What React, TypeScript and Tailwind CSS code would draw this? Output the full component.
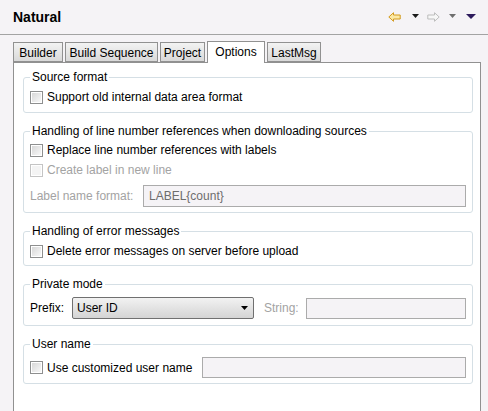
import React from 'react';

const font = { fontFamily: '"Liberation Sans", Arial, sans-serif' };

const Check: React.FC<{ disabled?: boolean }> = ({ disabled }) => (
  <span
    className={`inline-block w-[13px] h-[13px] shrink-0 border p-px ${
      disabled ? 'border-[#c4c4c4] bg-white' : 'border-[#8e8f8f] bg-white'
    }`}
  >
    <span
      className={`block w-full h-full ${
        disabled
          ? 'bg-[#f4f4f4]'
          : 'bg-gradient-to-br from-[#d8d8d8] to-[#f8f8f8]'
      }`}
    />
  </span>
);

const Group: React.FC<{ title: string; className?: string; children: React.ReactNode }> = ({
  title,
  className = '',
  children,
}) => (
  <fieldset
    className={`border border-[#d5dfe5] rounded-[3px] pl-[6px] pr-[6px] ${className}`}
  >
    <legend className="px-[2px] leading-[14px] text-black">{title}</legend>
    {children}
  </fieldset>
);

const Arrow: React.FC<{ dir: 'left' | 'right'; stroke: string; fill: string }> = ({
  dir,
  stroke,
  fill,
}) => (
  <svg width="13" height="10" viewBox="0 0 13 10" className={dir === 'right' ? '-scale-x-100' : ''}>
    <path
      d="M0.8 5 L5.5 0.7 V3 H12.2 V7 H5.5 V9.3 Z"
      fill={fill}
      stroke={stroke}
      strokeWidth="1"
      strokeLinejoin="miter"
    />
  </svg>
);

const Tri: React.FC<{ color: string; size?: number }> = ({ color, size = 7 }) => (
  <svg width={size} height={Math.ceil(size / 2) + 1} viewBox={`0 0 ${size} ${Math.ceil(size / 2) + 1}`}>
    <path d={`M0 0 H${size} L${size / 2} ${Math.ceil(size / 2)} Z`} fill={color} />
  </svg>
);

const tabs = [
  { label: 'Builder', w: 'w-[50px]' },
  { label: 'Build Sequence', w: 'w-[93px]' },
  { label: 'Project', w: 'w-[45px]' },
  { label: 'Options', w: 'w-[58px]', active: true },
  { label: 'LastMsg', w: 'w-[54px]' },
];

export default function App() {
  return (
    <div
      className="w-[488px] h-[411px] overflow-hidden bg-[#f5f3f6] text-[12px] text-black flex flex-col"
      style={font}
    >
      {/* header */}
      <div className="h-[35px] shrink-0 flex items-center justify-between pl-[13px] pr-[12px] border-b border-[#a3a3a3]">
        <span className="font-bold text-[14px] leading-none -mt-[1px]">Natural</span>
        <div className="flex items-center -mt-[1px]">
          <Arrow dir="left" stroke="#d39a1f" fill="#fbe9a6" />
          <span className="ml-[11px]"><Tri color="#1a1a1a" /></span>
          <span className="ml-[8px]"><Arrow dir="right" stroke="#bdbdbd" fill="#f7f7f7" /></span>
          <span className="ml-[9px]"><Tri color="#6e6e6e" /></span>
          <span className="ml-[10px]"><Tri color="#2c1a5c" size={10} /></span>
        </div>
      </div>

      {/* tabs */}
      <div className="flex items-end gap-[2px] pl-[13px] mt-[6px] shrink-0 relative z-10">
        {tabs.map((t) =>
          t.active ? (
            <div
              key={t.label}
              className={`${t.w} h-[22px] -mb-px bg-white border border-b-0 border-[#919191] flex items-center justify-center pb-[2px]`}
            >
              {t.label}
            </div>
          ) : (
            <div
              key={t.label}
              className={`${t.w} h-[20px] bg-gradient-to-b from-[#f3f3f3] to-[#d9d9d9] border border-[#919191] flex items-center justify-center pt-[1px]`}
            >
              {t.label}
            </div>
          )
        )}
      </div>

      {/* panel */}
      <div className="ml-[13px] w-[468px] flex-1 bg-white border border-[#919191] border-b-0 pl-[9px] pr-[7px] pt-[7px] flex flex-col gap-[11px]">
        <Group title="Source format" className="pb-[5px]">
          <label className="flex items-center gap-[4px] h-[20px] mt-[3px]">
            <Check />
            <span>Support old internal data area format</span>
          </label>
        </Group>

        <Group title="Handling of line number references when downloading sources" className="pb-[5px]">
          <label className="flex items-center gap-[4px] h-[20px] mt-[2px]">
            <Check />
            <span>Replace line number references with labels</span>
          </label>
          <label className="flex items-center gap-[4px] h-[20px]">
            <Check disabled />
            <span className="text-[#a3a3a3]">Create label in new line</span>
          </label>
          <div className="flex items-center h-[22px] mt-[5px]">
            <span className="text-[#a3a3a3] w-[113px]">Label name format:</span>
            <div className="flex-1 h-[22px] border border-[#ababab] bg-[#f5f3f6] pl-[5px] flex items-center text-[#6d6d6d]">
              LABEL{'{count}'}
            </div>
          </div>
        </Group>

        <Group title="Handling of error messages" className="pb-[4px]">
          <label className="flex items-center gap-[4px] h-[20px] mt-[3px]">
            <Check />
            <span>Delete error messages on server before upload</span>
          </label>
        </Group>

        <Group title="Private mode" className="pb-[6px]">
          <div className="flex items-center h-[22px] mt-[6px]">
            <span className="w-[42px]">Prefix:</span>
            <div className="w-[182px] h-[22px] rounded-[2px] border border-[#707070] bg-gradient-to-b from-[#f2f2f2] to-[#d4d4d4] flex items-center pl-[4px] pr-[5px]">
              <span className="flex-1">User ID</span>
              <Tri color="#000" />
            </div>
            <span className="ml-[10px] w-[42px] text-[#a3a3a3]">String:</span>
            <div className="flex-1 h-[21px] border border-[#ababab] bg-[#f5f3f6]" />
          </div>
        </Group>

        <Group title="User name" className="pb-[5px]">
          <div className="flex items-center h-[21px] mt-[6px]">
            <label className="flex items-center gap-[4px] w-[172px]">
              <Check />
              <span>Use customized user name</span>
            </label>
            <div className="flex-1 h-[21px] border border-[#ababab] bg-[#f5f3f6]" />
          </div>
        </Group>
      </div>
    </div>
  );
}
